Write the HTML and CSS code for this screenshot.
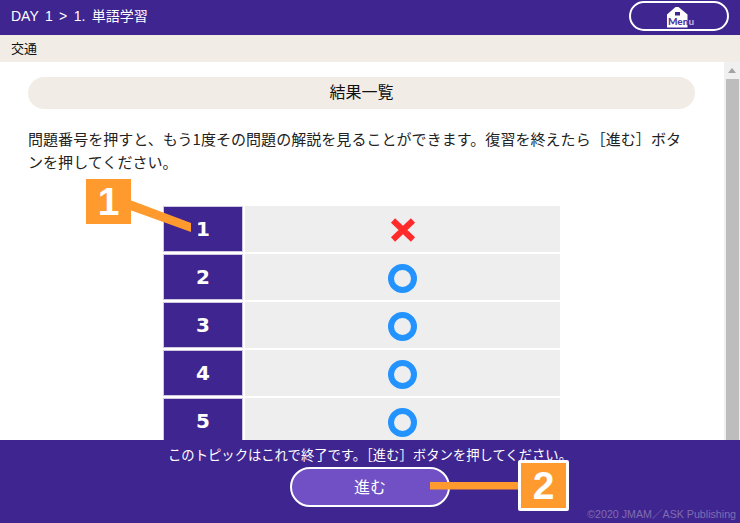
FILE: index.html
```html
<!DOCTYPE html>
<html lang="ja">
<head>
<meta charset="utf-8">
<title>結果一覧</title>
<link rel="stylesheet" href="styles.css">
</head>
<body>
<div class="app">
  <header class="topbar">
    <div class="crumb">DAY 1 &gt; 1. 単語学習</div>
    <button class="menu-btn">
      <span class="menu-icon">
        <svg class="house" width="21" height="21" viewBox="0 0 21 21"><path d="M0 7.5 L8.5 0 L11.5 0 L20.5 7.5 L20.5 20.5 L0 20.5 Z" fill="#fff"/><rect x="8" y="5" width="5" height="3.5" fill="#3f2590"/></svg>
        <span class="menu-label">Men<span class="menu-tail">u</span></span>
      </span>
    </button>
  </header>
  <div class="subbar">交通</div>
  <div class="middle">
    <main class="content">
      <h1 class="pill">結果一覧</h1>
      <p class="lead">問題番号を押すと、もう1度その問題の解説を見ることができます。復習を終えたら［進む］ボタンを押してください。</p>
      <div class="results">
        <div class="num">1</div><div class="mark"><svg class="cross" width="26" height="24" viewBox="0 0 26 24"><path d="M3 2.5 L23 21.5 M23 2.5 L3 21.5" stroke="#ff2a2a" stroke-width="6" fill="none"/></svg></div>
        <div class="num">2</div><div class="mark"><span class="ring"></span></div>
        <div class="num">3</div><div class="mark"><span class="ring"></span></div>
        <div class="num">4</div><div class="mark"><span class="ring"></span></div>
        <div class="num">5</div><div class="mark"><span class="ring"></span></div>
      </div>
    </main>
    <div class="scrollbar">
      <div class="arrow"></div>
      <div class="thumb"></div>
    </div>
  </div>
  <footer class="footer">
    <p class="notice">このトピックはこれで終了です。［進む］ボタンを押してください。</p>
    <button class="next">進む</button>
    <small class="copy">©2020 JMAM／ASK Publishing</small>
  </footer>
  <svg class="callout-lines" width="740" height="523" viewBox="0 0 740 523">
    <polygon points="130,200 191,223 191,232 130,210" fill="#ff9a2e"/>
    <rect x="430" y="482" width="92" height="7.5" fill="#ff9a2e"/>
  </svg>
  <div class="badge badge-one">1</div>
  <div class="badge badge-two">2</div>
</div>
</body>
</html>
```
FILE: styles.css
```css
* { box-sizing: border-box; }
html, body { margin: 0; padding: 0; }
body { width: 740px; height: 523px; overflow: hidden; font-family: "Noto Sans CJK JP", "Noto Sans", sans-serif; color: #222; background: #fff; }
.app { position: relative; width: 740px; height: 523px; display: flex; flex-direction: column; overflow: hidden; }
.topbar { height: 35px; flex: none; background: #3f2590; display: flex; align-items: center; justify-content: space-between; padding: 0 11px; }
.crumb { color: #fff; font-family: "Liberation Sans", "Noto Sans CJK JP", sans-serif; font-size: 14px; word-spacing: 2.5px; margin-top: -6px; }
.menu-btn { width: 100px; height: 30px; margin-top: -3px; padding: 0; background: #3f2590; border: 2px solid #fff; border-radius: 15px; display: flex; justify-content: center; align-items: center; }
.menu-icon { position: relative; display: block; width: 26px; height: 21px; margin-top: 2px; left: 1px; }
.house { position: absolute; left: 0; top: 0; }
.menu-label { position: absolute; left: 1px; top: 8.5px; font-family: "Lato", sans-serif; font-weight: 900; font-size: 10px; line-height: 12px; color: #4f3a9c; white-space: nowrap; }
.menu-tail { color: #b9aedb; }
.subbar { height: 27px; flex: none; background: #f1ede6; font-size: 13px; line-height: 25px; padding-left: 11px; color: #111; }
.middle { flex: 1; min-height: 0; display: flex; overflow: hidden; }
.content { flex: 1; min-width: 0; padding: 15px 0 0 28px; overflow: hidden; }
.pill { width: 667px; height: 32px; margin: 0; background: #f1ede6; border-radius: 16px; font-size: 16px; font-weight: 400; line-height: 29px; text-align: center; color: #111; }
.lead { width: 660px; margin: 18px 0 0; font-size: 15px; line-height: 23px; letter-spacing: 0.05px; color: #222; }
.results { display: grid; grid-template-columns: 80px 315px; grid-auto-rows: 46px; column-gap: 2px; row-gap: 2px; margin: 33px 0 0 135px; }
.num { background: #3f2590; border: 1px solid #cfc8e2; color: #fff; font-family: "DejaVu Sans", sans-serif; font-weight: 700; font-size: 20px; display: flex; align-items: center; justify-content: center; }
.mark { background: #eee; display: flex; align-items: center; justify-content: center; }
.ring { display: block; width: 29px; height: 29px; border: 6.5px solid #2393ff; border-radius: 50%; position: relative; top: 1px; }
.cross { position: relative; top: 1px; }
.scrollbar { width: 16px; flex: none; background: #f0f0f0; display: flex; flex-direction: column; align-items: center; }
.arrow { width: 0; height: 0; margin: 6px 0 6px; border-left: 4px solid transparent; border-right: 4px solid transparent; border-bottom: 5px solid #a3a3a3; }
.thumb { width: 13px; flex: 1; background: #bdbdbd; }
.footer { position: relative; height: 83px; flex: none; background: #3f2590; color: #fff; display: flex; flex-direction: column; align-items: center; }
.notice { margin: 5px 0 0; font-size: 13.33px; line-height: 20px; color: #fff; }
.next { width: 160px; height: 40px; margin-top: 2px; background: #7050c4; border: 2px solid #fff; border-radius: 20px; color: #fff; font-family: inherit; font-size: 16px; padding: 0 0 3px; }
.copy { position: absolute; right: 4px; bottom: 2px; font-family: "Liberation Sans", "Noto Sans CJK JP", sans-serif; font-size: 10.67px; color: #7f6db0; }
.callout-lines { position: absolute; left: 0; top: 0; pointer-events: none; }
.badge { position: absolute; display: flex; align-items: center; justify-content: center; background: #ff9a2e; color: #fff; font-family: "Liberation Sans", sans-serif; font-weight: 700; font-size: 39px; }
.badge-one { left: 86px; top: 179px; width: 45px; height: 45px; }
.badge-two { left: 518px; top: 460px; width: 51px; height: 51px; border: 3px solid #fff; border-radius: 2px; }
```
